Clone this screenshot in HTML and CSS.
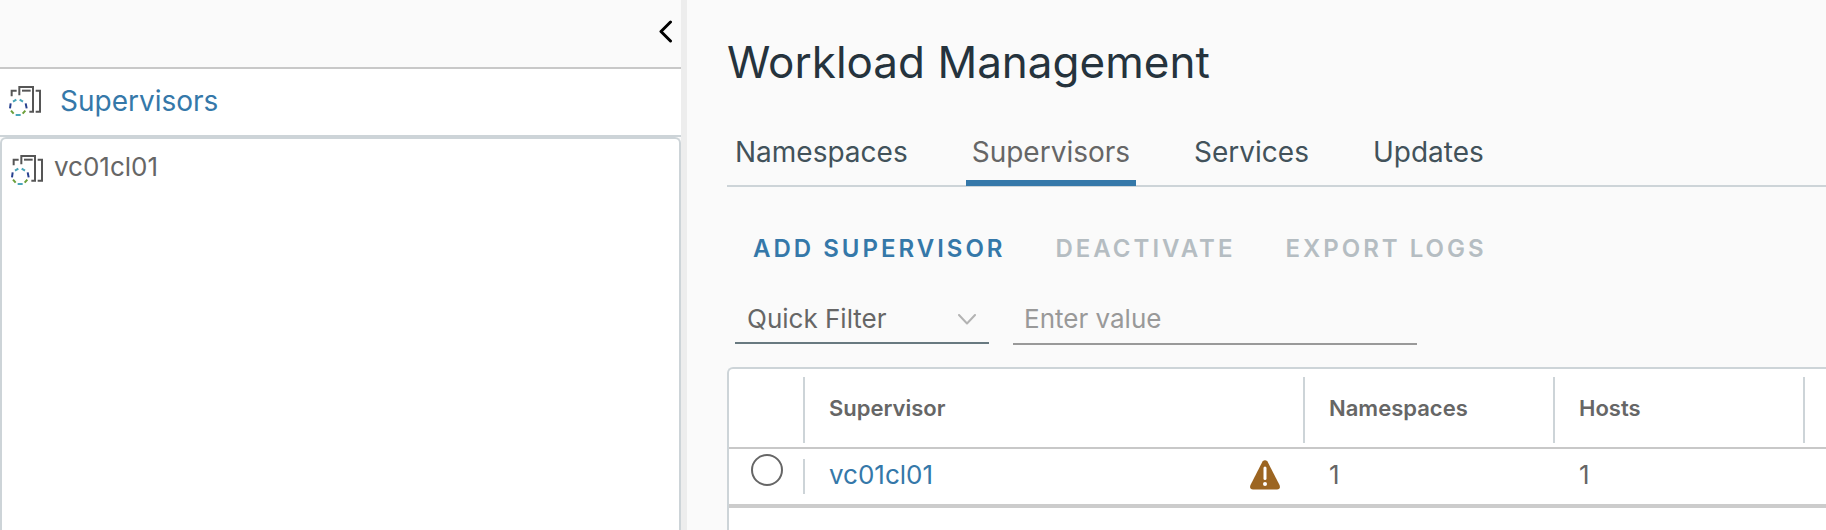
FILE: index.html
```html
<!DOCTYPE html>
<html lang="en">
<head>
<meta charset="utf-8">
<title>Workload Management</title>
<link rel="stylesheet" href="styles.css">
</head>
<body>
<svg class="symbols" aria-hidden="true">
  <symbol id="cluster" viewBox="0 0 96 90" fill="none">
    <g stroke="#565656" stroke-width="6">
      <path d="M23 14H8V31"/>
      <path d="M31 28V3H72V77H61"/>
      <path d="M39 14H65"/>
      <path d="M80 14H93V77H80"/>
    </g>
    <g stroke-width="6">
      <path stroke="#48a5b8" d="M12 47L22 41M32 41L42 47M20 87H35"/>
      <path stroke="#27408f" d="M5 52L3 67M50 52L53 67"/>
      <path stroke="#6b9f3a" d="M6 74L14 83M49 74L41 83"/>
    </g>
  </symbol>
</svg>
<div class="app">
  <aside class="sidebar">
    <header class="sidebar-head">
      <button class="collapse" type="button" aria-label="Collapse sidebar">
        <svg width="14" height="24" viewBox="0 0 14 24" fill="none" stroke="#000" stroke-width="3" stroke-linecap="round" stroke-linejoin="round"><path d="M11.500 3L2 12.500L11.500 22"/></svg>
      </button>
    </header>
    <div class="sidebar-title">
      <svg class="cluster-icon" aria-hidden="true"><use href="#cluster"/></svg>
      <a href="#supervisors">Supervisors</a>
    </div>
    <nav class="tree">
      <a class="tree-item" href="#vc01cl01">
        <svg class="cluster-icon" aria-hidden="true"><use href="#cluster"/></svg>
        <span>vc01cl01</span>
      </a>
    </nav>
  </aside>
  <main class="content">
    <h1>Workload Management</h1>
    <div class="tabs" role="tablist">
      <button type="button" role="tab" class="tab">Namespaces</button>
      <button type="button" role="tab" class="tab active" aria-selected="true">Supervisors</button>
      <button type="button" role="tab" class="tab">Services</button>
      <button type="button" role="tab" class="tab">Updates</button>
    </div>
    <div class="actions">
      <button type="button" class="action">Add Supervisor</button>
      <button type="button" class="action" disabled>Deactivate</button>
      <button type="button" class="action" disabled>Export Logs</button>
    </div>
    <div class="filters">
      <div class="select-wrap">
        <select class="filter-select" aria-label="Filter type"><option>Quick Filter</option></select>
        <svg class="select-arrow" width="18" height="12" viewBox="0 0 18 12" fill="none" stroke="#b3b3b3" stroke-width="2" stroke-linecap="round" stroke-linejoin="round" aria-hidden="true"><path d="M1 1L9 9.500L17 1"/></svg>
      </div>
      <input class="filter-input" type="text" placeholder="Enter value" aria-label="Filter value">
    </div>
    <div class="grid-box">
      <table class="grid">
        <colgroup><col class="c-pick"><col class="c-name"><col class="c-num"><col class="c-num"><col></colgroup>
        <thead>
          <tr>
            <th aria-label="Select"></th>
            <th><div class="cell">Supervisor</div></th>
            <th><div class="cell">Namespaces</div></th>
            <th><div class="cell">Hosts</div></th>
            <th><div class="cell"></div></th>
          </tr>
        </thead>
        <tbody>
          <tr>
            <td class="pick"><input type="radio" name="supervisor" aria-label="vc01cl01"></td>
            <td><div class="cell name-cell"><a href="#vc01cl01">vc01cl01</a>
              <svg width="30" height="30" viewBox="0 0 30 30" role="img" aria-label="Warning"><path fill="#9c6521" d="M12.500 1.600Q15-1.200 17.500 1.600L29.500 25Q31 29 27 29.500H3Q-1 29 .5 25Z"/><path stroke="#fff" stroke-width="3" stroke-linecap="round" d="M15 8V18.500"/><circle cx="15" cy="24" r="2" fill="#fff"/></svg>
            </div></td>
            <td><div class="cell">1</div></td>
            <td><div class="cell">1</div></td>
            <td></td>
          </tr>
        </tbody>
      </table>
    </div>
  </main>
</div>
</body>
</html>
```

FILE: styles.css
```css
* { box-sizing: border-box; }
body {
  margin: 0;
  background: #fafafa;
  color: #666;
  font-family: Inter, "Open Sans", sans-serif;
  font-size: 26px;
}
button, input, select { font: inherit; color: inherit; }
button { background: none; border: 0; padding: 0; }
a { color: #3578a9; text-decoration: none; }
.symbols { position: absolute; width: 0; height: 0; }
.app {
  display: grid;
  grid-template-columns: minmax(0, 687fr) minmax(0, 1139fr);
  height: 100vh;
  overflow: hidden;
}
.sidebar {
  display: flex;
  flex-direction: column;
  border-right: 6px solid #ededed;
}
.sidebar-head {
  display: flex;
  align-items: center;
  justify-content: flex-end;
  height: 69px;
  padding: 0 8px 6px 0;
  border-bottom: 2px solid #c8c8c8;
}
.collapse { display: flex; }
.cluster-icon { width: 32px; height: 30px; flex: none; }
.sidebar-title {
  display: flex;
  align-items: center;
  gap: 19px;
  height: 68px;
  padding: 0 0 2px 9px;
  background: #fff;
  border-bottom: 2px solid #cdd4d8;
  font-size: 28px;
}
.tree {
  flex: 1;
  padding: 10px 9px;
  background: #fff;
  border: 2px solid #cdd4d8;
  border-bottom: 0;
  border-radius: 6px 6px 0 0;
}
.tree-item { display: flex; align-items: center; gap: 11px; color: #666; line-height: 32px; }
.tree-item .cluster-icon { margin-top: 6px; }
.content { display: flex; flex-direction: column; padding-left: 40px; }
h1 {
  margin: 0;
  padding-top: 34px;
  color: #25333d;
  font-size: 44px;
  font-weight: 400;
  line-height: 56px;
}
.tabs {
  display: flex;
  gap: 52px;
  height: 69px;
  margin-top: 28px;
  padding-left: 2px;
  border-bottom: 2px solid #cdd4d8;
}
.tab {
  height: 68px;
  padding: 6px 6px 0;
  border-bottom: 6px solid transparent;
  color: #42525a;
  font-size: 28px;
}
.tab.active { color: #666; border-bottom-color: #3578a9; }
.actions {
  display: flex;
  gap: 50px;
  padding: 46px 0 0 26px;
}
.action {
  color: #3578a9;
  font-size: 24px;
  font-weight: 600;
  line-height: 32px;
  letter-spacing: 3px;
  text-transform: uppercase;
}
.action:disabled { color: #b5bdc2; }
.filters {
  display: flex;
  gap: 24px;
  padding: 29px 0 22px 8px;
}
.select-wrap { position: relative; width: 254px; }
.filter-select, .filter-input {
  height: 50px;
  border: 0;
  border-bottom: 2px solid #687980;
  border-radius: 0;
  background: transparent;
  padding: 0 12px;
  outline: 0;
}
.filter-select { width: 100%; appearance: none; }
.select-arrow { position: absolute; right: 13px; top: 20px; pointer-events: none; }
.filter-input { width: 404px; height: 51px; padding-left: 11px; border-bottom-color: #999; }
.filter-input::placeholder { color: #999; opacity: 1; }
.grid-box {
  flex: 1;
  background: #fff;
  border: 2px solid #cdd4d8;
  border-width: 2px 0 0 2px;
  border-radius: 6px 0 0 0;
}
.grid { width: 100%; table-layout: fixed; border-collapse: separate; border-spacing: 0; }
.c-pick { width: 74px; }
.c-name { width: 500px; }
.c-num { width: 250px; }
th, td { padding: 0; text-align: left; }
th { height: 80px; padding: 8px 0 4px; border-bottom: 2px solid #c8c8c8; font-size: 22px; font-weight: 600; }
td { height: 59px; border-bottom: 4px solid #ccc; }
.cell { display: flex; align-items: center; padding: 0 0 4px 24px; border-left: 2px solid #cdd4d8; }
th .cell { height: 66px; }
td .cell { height: 35px; border-color: transparent; }
td .name-cell { justify-content: space-between; padding-right: 23px; border-color: #cdd4d8; }
.pick { padding: 0 0 14px 22px; line-height: 0; }
.pick input {
  appearance: none;
  width: 32px;
  height: 32px;
  margin: 0;
  border: 2px solid #666;
  border-radius: 50%;
}
```
